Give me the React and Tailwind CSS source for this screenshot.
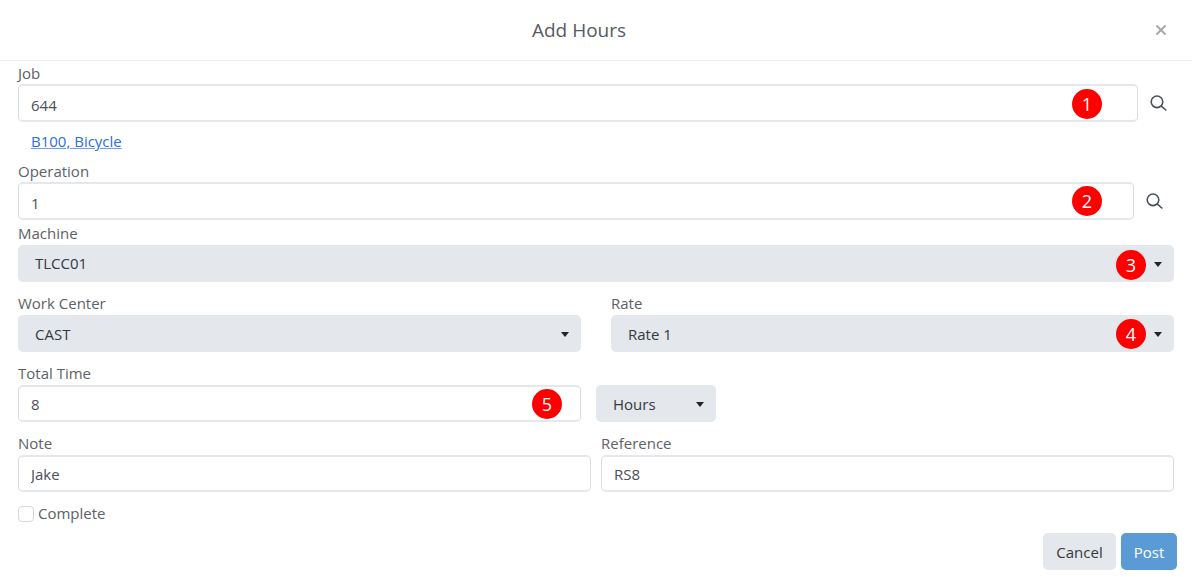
import { X } from 'lucide-react';

function Badge({ n, className }) {
	return (
		<span className={`absolute flex h-[30px] w-[30px] items-center justify-center rounded-full bg-[#ff0000] text-[18px] leading-none text-white ${className}`}>
			{n}
		</span>
	);
}

function Caret() {
	return (
		<svg className="absolute right-[12px] top-1/2 -mt-[2px]" width="8" height="5" viewBox="0 0 8 5">
			<path d="M0 0h8L4 5z" fill="#212529" />
		</svg>
	);
}

function SearchIcon() {
	return (
		<svg width="17" height="16" viewBox="0 0 17 16" fill="none" stroke="#495057" strokeWidth="1.6" strokeLinecap="round">
			<circle cx="7" cy="6.8" r="5.8" />
			<path d="M11.4 11.2L15.8 15" />
		</svg>
	);
}

function Field({ value, badge, badgeClass, className = '', inputClass = 'h-[37px]' }) {
	return (
		<div className={`relative ${className}`}>
			<input
				readOnly
				value={value}
				className={`block w-full rounded-[5px] border border-[#d8dbe0] border-y-2 border-y-[#e4e7eb] bg-white px-3 text-[15px] text-[#495057] outline-none ${inputClass}`}
			/>
			{badge && <Badge n={badge} className={badgeClass} />}
		</div>
	);
}

function Picker({ value, badge, badgeClass, className = '', textClass = 'pt-[2px]' }) {
	return (
		<div className={`relative ${className}`}>
			<select
				value={value}
				onChange={() => {}}
				className={`block h-[37px] w-full appearance-none rounded-[5px] bg-[#e4e7eb] pl-[17px] pr-6 text-[15px] text-[#343a40] outline-none ${textClass}`}
			>
				<option>{value}</option>
			</select>
			<Caret />
			{badge && <Badge n={badge} className={badgeClass} />}
		</div>
	);
}

function Label({ children }) {
	return <label className="block h-[21px] text-[15px] leading-[21px] text-[#5b6268]">{children}</label>;
}

export default function App() {
	return (
		<div className="h-[577px] w-[1192px] overflow-hidden bg-white font-['Open_Sans',sans-serif]">
			<div className="flex h-[61px] items-center border-b border-[#f1f2f4]">
				<h1 className="flex-1 text-center text-[19px] font-normal text-[#555b61]">Add Hours</h1>
				<button className="flex w-[34px] justify-start text-[#a3a9ae]">
					<X className="-ml-[5px] h-[16px] w-[16px]" strokeWidth={3} />
				</button>
			</div>

			<div className="px-[18px] pt-[2px]">
				<Label>Job</Label>
				<div className="flex items-center">
					<Field value="644" inputClass="h-[38px] pt-[4px]" badge="1" badgeClass="right-[36px] top-[5px]" className="flex-1" />
					<div className="flex w-[36px] justify-end pr-[7px]">
						<SearchIcon />
					</div>
				</div>
				<div className="flex h-[39px] items-center pl-[13px]">
					<a href="#" className="text-[15px] text-[#2a6fdb] underline decoration-[#6ea0e8]">B100, Bicycle</a>
				</div>

				<Label>Operation</Label>
				<div className="flex items-center">
					<Field value="1" inputClass="h-[38px] pt-[4px]" badge="2" badgeClass="right-[32px] top-1/2 -translate-y-1/2" className="flex-1" />
					<div className="flex w-[40px] justify-end pr-[11px]">
						<SearchIcon />
					</div>
				</div>

				<div className="mt-[3px]">
					<Label>Machine</Label>
					<div className="pt-px">
						<Picker value="TLCC01" textClass="pt-0" badge="3" badgeClass="right-[28px] top-[5px]" />
					</div>
				</div>

				<div className="mt-[11px] grid grid-cols-2 gap-[30px]">
					<div>
						<Label>Work Center</Label>
						<div className="pt-px">
							<Picker value="CAST" />
						</div>
					</div>
					<div>
						<Label>Rate</Label>
						<div className="pt-px">
							<Picker value="Rate 1" badge="4" badgeClass="right-[28px] top-1/2 -translate-y-1/2" />
						</div>
					</div>
				</div>

				<div className="mt-[11px]">
					<Label>Total Time</Label>
					<div className="flex gap-[15px] pt-px">
						<Field value="8" badge="5" badgeClass="right-[19px] top-1/2 -translate-y-1/2" className="w-[563px]" />
						<Picker value="Hours" className="w-[120px]" />
					</div>
				</div>

				<div className="mt-[11px] grid grid-cols-2 gap-[10px]">
					<div>
						<Label>Note</Label>
						<div className="pt-px">
							<Field value="Jake" />
						</div>
					</div>
					<div>
						<Label>Reference</Label>
						<div className="pt-px">
							<Field value="RS8" />
						</div>
					</div>
				</div>

				<label className="mt-[11px] flex h-[21px] items-center gap-[4px] text-[15px] text-[#5b6268]">
					<input type="checkbox" className="h-4 w-4 appearance-none rounded-[4px] border border-[#d4d7dc] bg-white" />
					Complete
				</label>

				<div className="-mr-[3px] mt-[9px] flex justify-end gap-[5px]">
					<button className="h-[37px] w-[73px] rounded-[5px] bg-[#e4e7eb] pt-[2px] text-[15px] text-[#343a40]">Cancel</button>
					<button className="h-[37px] w-[56px] rounded-[5px] bg-[#5b9bd5] pt-[2px] text-[15px] text-white">Post</button>
				</div>
			</div>
		</div>
	);
}
